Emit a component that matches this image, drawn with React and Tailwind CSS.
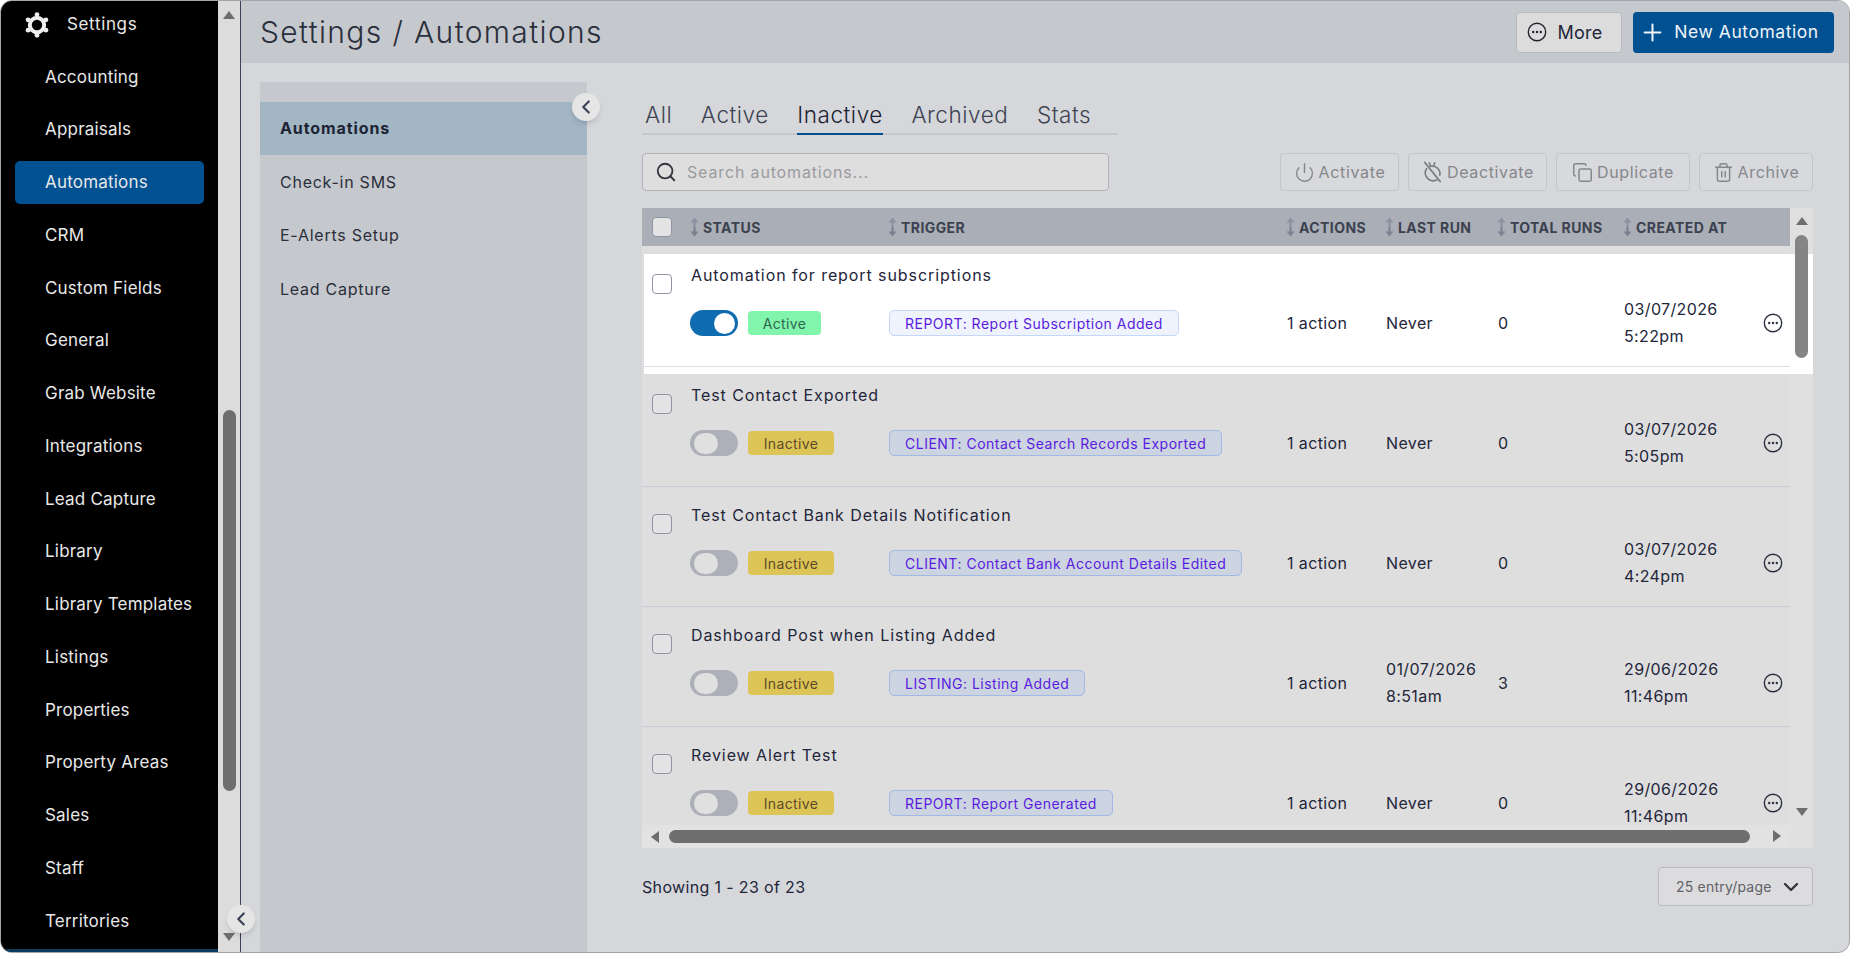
import React from "react";
import { Plus, Power, Copy, Trash2, Search, ChevronDown, ChevronLeft } from "lucide-react";

const navItems = ["Accounting","Appraisals","Automations","CRM","Custom Fields","General","Grab Website","Integrations","Lead Capture","Library","Library Templates","Listings","Properties","Property Areas","Sales","Staff","Territories"];

const rows = [
  { title: "Automation for report subscriptions", active: true, trigger: "REPORT: Report Subscription Added", last: ["Never"], runs: "0", date: ["03/07/2026","5:22pm"] },
  { title: "Test Contact Exported", trigger: "CLIENT: Contact Search Records Exported", last: ["Never"], runs: "0", date: ["03/07/2026","5:05pm"] },
  { title: "Test Contact Bank Details Notification", trigger: "CLIENT: Contact Bank Account Details Edited", last: ["Never"], runs: "0", date: ["03/07/2026","4:24pm"] },
  { title: "Dashboard Post when Listing Added", trigger: "LISTING: Listing Added", last: ["01/07/2026","8:51am"], runs: "3", date: ["29/06/2026","11:46pm"] },
  { title: "Review Alert Test", trigger: "REPORT: Report Generated", last: ["Never"], runs: "0", date: ["29/06/2026","11:46pm"] },
];

function Gear() {
  const knobs = [0, 60, 120, 180, 240, 300];
  return (
    <svg width="26" height="26" viewBox="0 0 26 26" fill="none">
      {knobs.map((a) => (
        <circle key={a} cx={13 + 10.3 * Math.sin((a * Math.PI) / 180)} cy={13 - 10.3 * Math.cos((a * Math.PI) / 180)} r="2.4" fill="#efefef" />
      ))}
      <circle cx="13" cy="13" r="7.2" stroke="#efefef" strokeWidth="4" />
    </svg>
  );
}
function Dots({ size = 20, color = "#2b3040" }) {
  return (
    <svg width={size} height={size} viewBox="0 0 20 20" fill="none">
      <circle cx="10" cy="10" r="8.7" stroke={color} strokeWidth="1.4"/>
      <circle cx="6.2" cy="10" r="1.2" fill={color}/><circle cx="10" cy="10" r="1.2" fill={color}/><circle cx="13.8" cy="10" r="1.2" fill={color}/>
    </svg>
  );
}
function Sort() {
  return (
    <svg width="9" height="20" viewBox="0 0 9 20" className="shrink-0">
      <path d="M4.5 0.5L8.5 5.5H5.6V10H3.4V5.5H.5z" fill="#8a91a0"/>
      <path d="M4.5 19.5L.5 14.5H3.4V10H5.6V14.5H8.5z" fill="#7a8190"/>
    </svg>
  );
}
function Tri({ dir, className }) {
  const d = { up: "M0 8L6 0l6 8z", down: "M0 0l6 8 6-8z", left: "M8 0v12L0 6z", right: "M0 0v12l8-6z" }[dir];
  const w = dir === "up" || dir === "down";
  return <svg width={w ? 12 : 8} height={w ? 8 : 12} viewBox={w ? "0 0 12 8" : "0 0 8 12"} className={className}><path d={d} fill="#6e6e6e"/></svg>;
}
function TimerOff() {
  return (
    <svg width="22" height="22" viewBox="0 0 24 24" fill="none" stroke="#7d7f84" strokeWidth="1.8" strokeLinecap="round" strokeLinejoin="round">
      <path d="M4 1.5l17 21"/><path d="M9 2l1.5 4"/><path d="M15 2l-1.5 4"/><path d="M6 8.5a8.6 8.6 0 0 0 11.5 12"/><path d="M10 5.8A8.6 8.6 0 0 1 20.6 15.5"/>
    </svg>
  );
}
function Check({ white }) {
  return <div className={`w-[20px] h-[20px] rounded-[4px] border border-[#8f95a3] ${white ? "bg-white" : "bg-[#e3e3e3]"}`} />;
}
function Toggle({ on }) {
  return on ? (
    <div className="w-[48px] h-[26px] rounded-full bg-[#0f6cb0] flex items-center justify-end pr-[3px]"><div className="w-[21px] h-[21px] rounded-full bg-white" /></div>
  ) : (
    <div className="w-[48px] h-[26px] rounded-full bg-[#adb0b8] flex items-center pl-[4px]"><div className="w-[24px] h-[21px] rounded-full bg-[#e0e0e0]" /></div>
  );
}
function ActionBtn({ icon, label, w }) {
  return (
    <button className={`h-[38px] ${w} flex items-center justify-center gap-[4px] rounded-[4px] border border-[#c4c6ca] text-[16px] tracking-[0.65px] text-[#85878c] bg-[#d8d9dc]`}>
      {icon}{label}
    </button>
  );
}
const grid = "grid grid-cols-[48px_198px_398px_99px_112px_126px_132px_35px]";

function Row({ r }) {
  return (
    <div className="relative h-[120px] shrink-0 w-[1148px]">
      {r.active && <div className="absolute left-[2px] -right-[23px] top-[7px] -bottom-[7px] bg-white" />}
      <div className={`relative h-full border-b ${r.active ? "border-[#dcdfe8]" : "border-[#c9cad6]"} ${grid} text-[#23263a] text-[16px] tracking-[0.38px]`}>
        <div className="pt-[27px] pl-[10px]"><Check white={r.active} /></div>
        <div className="col-span-2 flex flex-col pl-[1px]">
          <div className="h-[27px] mt-[15px] leading-[27px] tracking-[0.92px] whitespace-nowrap">{r.title}</div>
          <div className="mt-[21px] flex items-center h-[26px]">
            <div className="flex items-center w-[199px] -ml-[1px] gap-[10px]">
              <Toggle on={r.active} />
              {r.active
                ? <span className="h-[24px] w-[73px] rounded-[4px] bg-[#82f5ac] text-[#2f6650] text-[14px] flex items-center justify-center">Active</span>
                : <span className="h-[24px] w-[86px] rounded-[4px] bg-[#dcc556] text-[#5e4a26] text-[14px] flex items-center justify-center">Inactive</span>}
            </div>
            <span className={`h-[26px] px-[15px] rounded-[5px] border text-[14px] tracking-[0.5px] flex items-center whitespace-nowrap text-[#5a1be0] ${r.active ? "bg-[#eef3fe] border-[#c5d6f6]" : "bg-[#ccd4e1] border-[#a3b8e5]"}`}>{r.trigger}</span>
          </div>
        </div>
        <div className="flex items-center whitespace-nowrap mt-[51px] h-[50px] pl-[1px]">1 action</div>
        {[r.last, [r.runs], r.date].map((t, k) => (
          <div key={k} className="flex flex-col justify-center mt-[51px] h-[50px] pl-[1px] leading-[27px] whitespace-nowrap">
            {t.map((l) => <div key={l}>{l}</div>)}
          </div>
        ))}
        <div className="flex items-center mt-[51px] h-[50px] justify-center"><Dots /></div>
      </div>
    </div>
  );
}

export default function App() {
  return (
    <div className="w-[1850px] h-[953px] bg-white overflow-hidden" style={{ fontFamily: "Inter, 'Liberation Sans', sans-serif" }}>
      <div className="w-full h-full flex rounded-[12px] overflow-hidden border border-[#a5a5a5] bg-[#d5d7db] relative">
        {/* Sidebar */}
        <aside className="w-[217px] shrink-0 bg-black text-[#e8e8e8] text-[17px] tracking-[0.2px] relative h-full overflow-hidden">
          <div className="h-[47px] flex items-center pl-[23px] gap-[17px]"><Gear /><span className="tracking-[0.65px]">Settings</span></div>
          <nav className="px-[14px] pt-[3px] flex flex-col">
            {navItems.map((n) => (
              <div key={n} className="h-[52.75px] flex items-center">
                <div className={`w-[190px] h-[43px] flex items-center pl-[30px] rounded-[5px] ${n === "Automations" ? "bg-[#005192]" : ""}`}>{n}</div>
              </div>
            ))}
          </nav>
          <div className="absolute left-0 right-0 bottom-0 h-[3px] bg-[#0b3b5e]" />
        </aside>
        {/* Sidebar scroll track */}
        <div className="w-[22px] shrink-0 bg-[#dcdcdc] flex flex-col items-center py-[10px] relative">
          <Tri dir="up" />
          <div className="mt-[391px] w-[13px] h-[381px] rounded-full bg-[#6e6e6e]" />
          <div className="flex-1" />
          <Tri dir="down" className="mb-[1px]" />
        </div>
        <div className="w-[1px] shrink-0 bg-[#3c4358]" />
        {/* Main */}
        <main className="flex-1 flex flex-col min-w-0 relative">
          <header className="h-[62px] shrink-0 bg-[#c5c8cc] flex items-center justify-between pl-[19px] pr-[15px]">
            <h1 className="text-[30px] font-light tracking-[1.36px] text-[#2b2f3c]">Settings / Automations</h1>
            <div className="flex gap-[11px]">
              <button className="w-[106px] h-[41px] rounded-[4px] bg-[#dcdcdc] border border-[#b8babe] flex items-center justify-center gap-[10px] pr-[8px] text-[18px] tracking-[0.3px] text-[#23263a]"><Dots size={20} color="#22242e" />More</button>
              <button className="w-[201px] h-[41px] rounded-[4px] bg-[#005192] flex items-center justify-center gap-[8px] pr-[9px] text-[17.5px] tracking-[0.55px] text-[#f0f3f7]"><Plus size={27} strokeWidth={1.8} />New Automation</button>
            </div>
          </header>
          <div className="flex-1 flex pl-[19px] min-h-0">
            {/* settings list */}
            <div className="w-[327px] shrink-0 mt-[19px] bg-[#c5c8cc] pt-[20px] text-[16px] tracking-[0.75px] text-[#2b2f3c]">
              <div className="h-[53px] bg-[#a2b6c4] flex items-center pl-[20px] pb-[2px] font-bold tracking-[0.9px] text-[#1d2235]">Automations</div>
              {["Check-in SMS","E-Alerts Setup","Lead Capture"].map((t) => <div key={t} className="h-[53.5px] flex items-center pl-[20px]">{t}</div>)}
            </div>
            {/* content */}
            <div className="flex-1 min-w-0 pl-[55px] pr-[36px] flex flex-col">
              <div className="mt-[35px] w-[476px] h-[37px] flex gap-[28.5px] text-[22.5px] font-light tracking-[0.55px] text-[#3f4453] border-b-[2px] border-[#c5c7cc] pl-[3px]">
                <span>All</span><span>Active</span>
                <span className="h-[37px] border-b-[2px] border-[#00508f] text-[#1d2235]">Inactive</span>
                <span>Archived</span><span>Stats</span>
              </div>
              <div className="mt-[18px] h-[38px] flex items-center justify-between">
                <div className="w-[467px] h-[38px] rounded-[4px] border border-[#b0b2b8] bg-[#dedede] flex items-center pl-[12px] gap-[10px] text-[16px] tracking-[0.85px] text-[#9b9b9f]">
                  <Search size={22} strokeWidth={2} color="#33363f" />Search automations...
                </div>
                <div className="flex gap-[9px]">
                  <ActionBtn w="w-[119px]" icon={<Power size={21} strokeWidth={1.6} />} label="Activate" />
                  <ActionBtn w="w-[139px]" icon={<TimerOff />} label="Deactivate" />
                  <ActionBtn w="w-[134px]" icon={<Copy size={21} strokeWidth={1.7} />} label="Duplicate" />
                  <ActionBtn w="w-[114px]" icon={<Trash2 size={21} strokeWidth={1.7} />} label="Archive" />
                </div>
              </div>
              {/* table */}
              <div className="mt-[17px] w-[1171px] h-[640px] bg-[#e0e0e0] relative shrink-0 overflow-hidden">
                <div className={`${grid} w-[1148px] h-[38px] bg-[#aaaeb6] items-center text-[14px] font-bold tracking-[0.42px] text-[#3c4150]`}>
                  <div className="pl-[10px]"><Check /></div>
                  {["STATUS","TRIGGER","ACTIONS","LAST RUN","TOTAL RUNS","CREATED AT"].map((h) => (
                    <div key={h} className="flex items-center gap-[4px] whitespace-nowrap"><Sort />{h}</div>
                  ))}
                </div>
                <div className="w-[1171px] h-[579px] overflow-hidden flex flex-col pt-[1px]">
                  <div className="w-[1148px] bg-[#dedede] flex flex-col">
                    {rows.map((r) => <Row key={r.title} r={r} />)}
                  </div>
                </div>
                {/* scrollbars */}
                <div className="absolute right-0 top-0 bottom-[32px] w-[23px] flex flex-col items-center pt-[9px]">
                  <Tri dir="up" />
                  <div className="mt-[10px] w-[13px] h-[123px] rounded-full bg-[#848484]" />
                  <div className="flex-1" />
                  <Tri dir="down" />
                </div>
                <div className="absolute left-0 right-[23px] bottom-0 h-[23px] flex items-center pl-[9px] pr-[10px] bg-[#e2e2e2]">
                  <Tri dir="left" />
                  <div className="ml-[10px] w-[1081px] h-[13px] rounded-full bg-[#6e6e6e]" />
                  <div className="flex-1" />
                </div>
                <Tri dir="right" className="absolute right-[32px] bottom-[6px]" />
              </div>
              <div className="mt-[19px] h-[39px] flex items-center justify-between w-[1171px]">
                <span className="text-[16px] tracking-[0.35px] text-[#23263a]">Showing 1 - 23 of 23</span>
                <div className="w-[155px] h-[39px] rounded-[4px] border border-[#b8babf] bg-[#dcdcde] flex items-center justify-between pl-[17px] pr-[9px] text-[14px] tracking-[0.2px] text-[#5f6167]">25 entry/page<ChevronDown size={24} strokeWidth={2.4} color="#33363f" /></div>
              </div>
            </div>
          </div>
          {/* collapse handles */}
          <button className="absolute left-[331px] top-[92px] w-[28px] h-[28px] rounded-full bg-[#e5e5e6] shadow-md flex items-center justify-center"><ChevronLeft size={22} strokeWidth={2.4} color="#3c4358" /></button>
        </main>
        <button className="absolute left-[226px] top-[904px] w-[28px] h-[28px] rounded-full bg-[#e5e5e6] shadow-md flex items-center justify-center"><ChevronLeft size={22} strokeWidth={2.4} color="#3c4358" /></button>
      </div>
    </div>
  );
}
